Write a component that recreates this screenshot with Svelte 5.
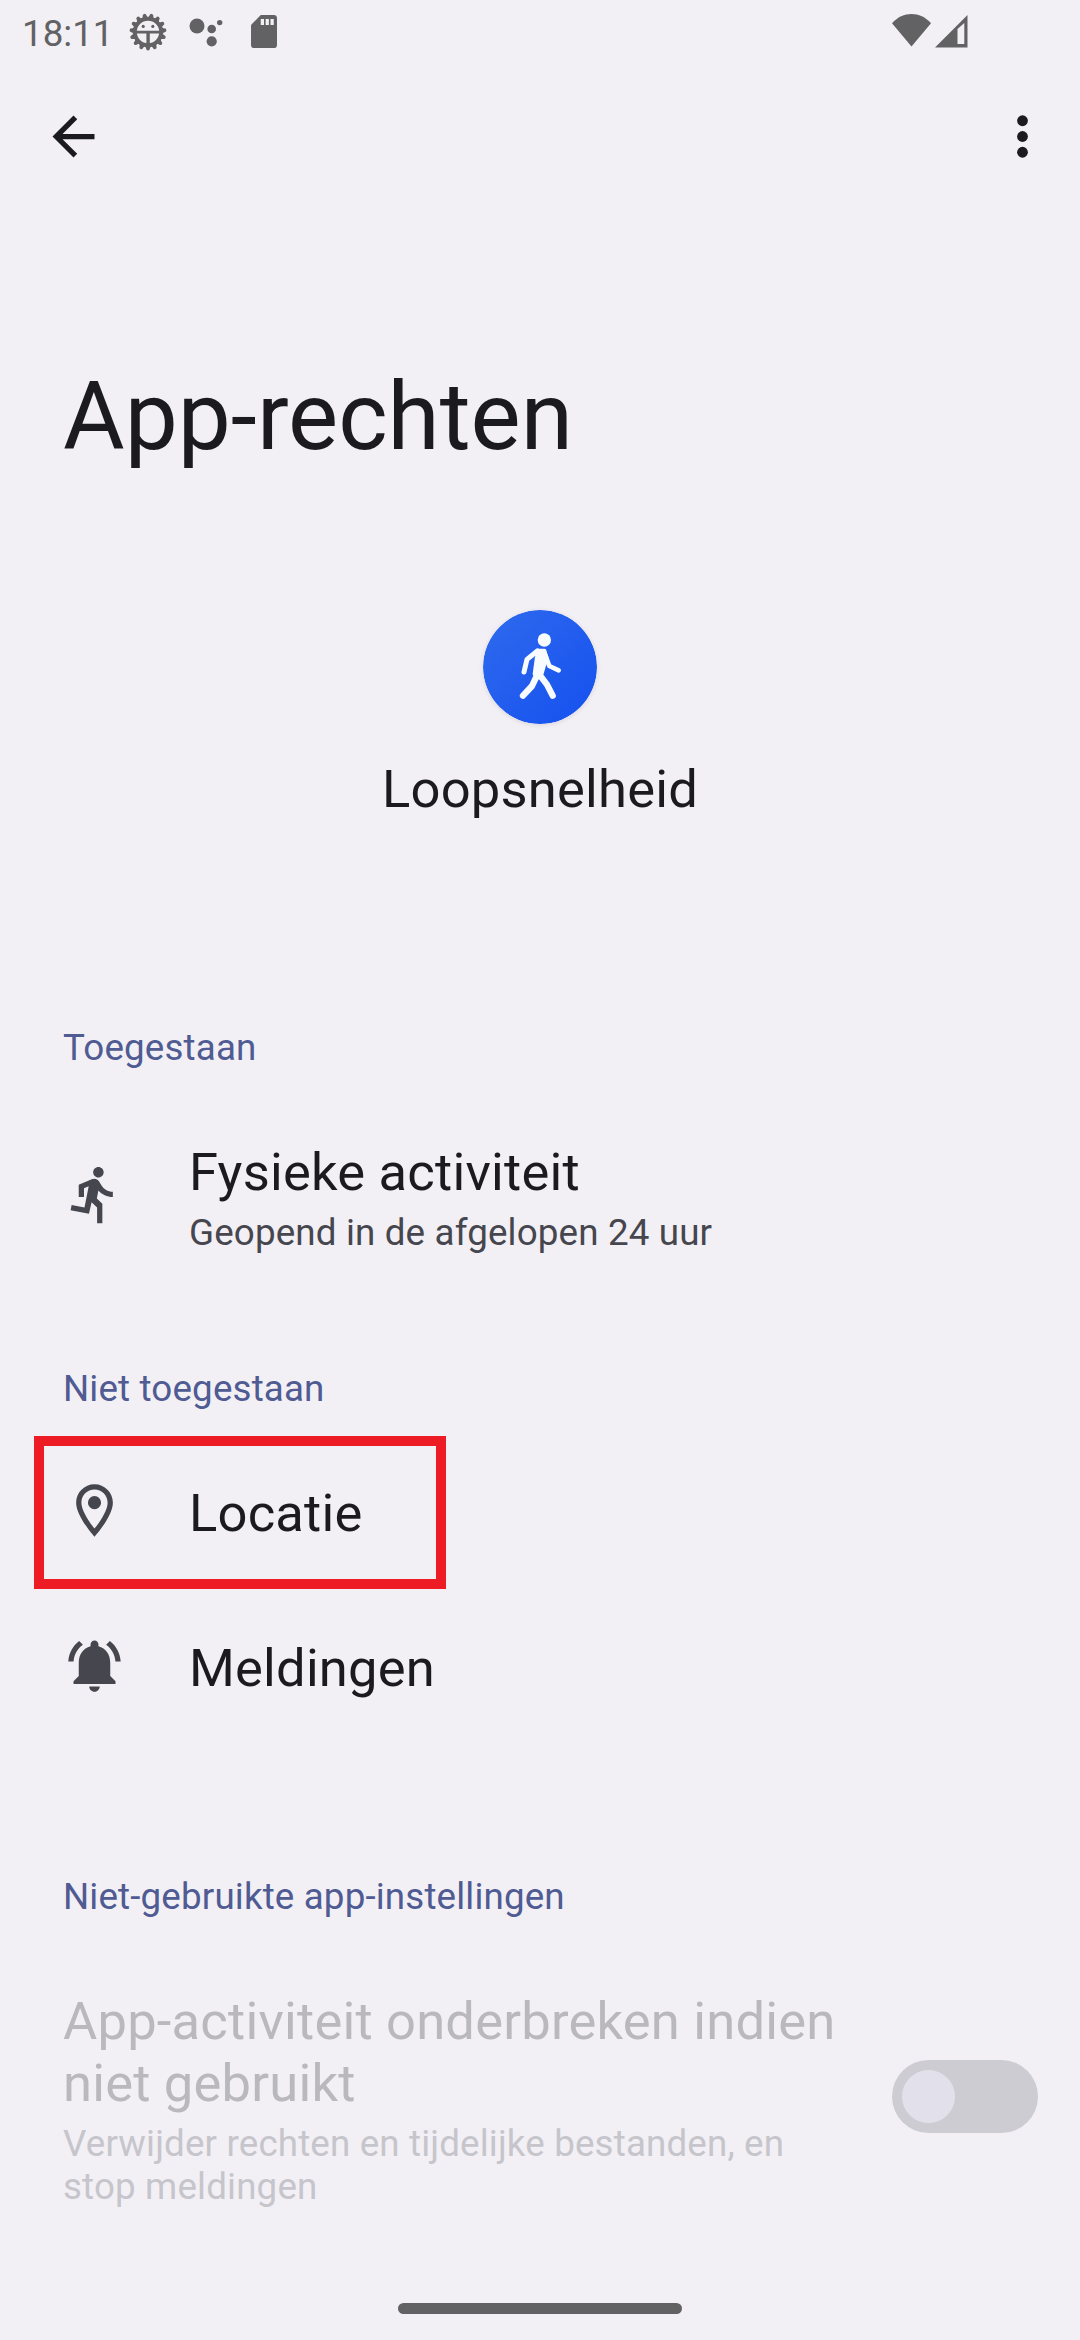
<script>
  const teeth = Array.from({ length: 15 }, (_, i) => 90 + i * 24);
  const blocked = [
    {
      label: 'Locatie',
      highlighted: true,
      icon: 'M12 2C8.13 2 5 5.13 5 9c0 5.25 7 13 7 13s7-7.75 7-13c0-3.87-3.13-7-7-7zM7 9c0-2.76 2.24-5 5-5s5 2.24 5 5c0 2.88-2.88 7.19-5 9.88C9.92 16.21 7 11.85 7 9zM12 6.5a2.5 2.5 0 1 0 0 5 2.5 2.5 0 0 0 0-5z',
    },
    {
      label: 'Meldingen',
      highlighted: false,
      icon: 'M7.58 4.08L6.15 2.65C3.75 4.48 2.17 7.3 2.03 10.5h2c.15-2.65 1.51-4.97 3.55-6.42zm12.39 6.42h2c-.15-3.2-1.73-6.02-4.12-7.85l-1.42 1.43c2.02 1.45 3.39 3.77 3.54 6.42zM18 11c0-3.07-1.64-5.64-4.5-6.32V4c0-.83-.67-1.5-1.5-1.5s-1.5.67-1.5 1.5v.68C7.63 5.36 6 7.92 6 11v5l-2 2v1h16v-1l-2-2v-5zm-6 11c.14 0 .27-.01.4-.04.65-.14 1.18-.58 1.44-1.18.1-.24.15-.5.15-.78h-4c.01 1.1.9 2 2.01 2z',
    },
  ];
</script>

<div class="screen">
  <header class="status">
    <span class="clock">18:11</span>
    <svg class="bug" viewBox="-19 -19 38 38">
      {#each teeth as angle}
        <path d="M13.5 -3L16.6 -1.9a1.9 1.9 0 0 1 0 3.8L13.5 3z" transform="rotate({angle})" />
      {/each}
      <circle r="13.2" fill="none" stroke="currentColor" stroke-width="4" />
      <path d="M-12 -1.3h24v2.8H1.8V12h-3.4V1.5H-12z" />
      <circle cx="-4.8" cy="-5.6" r="1.6" />
      <circle cx="4.8" cy="-5.6" r="1.6" />
    </svg>
    <svg class="dots" viewBox="0 0 34 34">
      <circle cx="8" cy="12" r="7.5" />
      <circle cx="22.7" cy="15" r="4.3" />
      <circle cx="30.7" cy="8.6" r="2.7" />
      <circle cx="22.7" cy="27.3" r="5.1" />
    </svg>
    <svg class="sd" viewBox="4 2 16 20" preserveAspectRatio="none">
      <path d="M18 2h-8L4.02 8 4 20c0 1.1.4 2 1.5 2h13c1.1 0 1.5-.9 1.5-2V4c0-1.1-.4-2-2-2zm-6 6h-2V4.4h2V8zm3 0h-2V4.4h2V8zm3 0h-2V4.4h2V8z" />
    </svg>
    <svg class="wifi" viewBox="0 0 39 33"><path d="M0 9.2C11-3 28-3 39 9.2L19.5 32.6z" /></svg>
    <svg class="signal" viewBox="0 0 33 33">
      <path fill-rule="evenodd" d="M0 32.5L32.5 0v32.5zM22.5 14v14.9h6.8V8z" />
    </svg>
  </header>

  <nav class="toolbar">
    <svg class="icon" viewBox="0 0 24 24"><path d="M20 11H7.83l5.59-5.59L12 4l-8 8 8 8 1.41-1.41L7.83 13H20v-2z" /></svg>
    <svg class="icon" viewBox="0 0 24 24">
      <circle cx="12" cy="6" r="2.05" /><circle cx="12" cy="12" r="2.05" /><circle cx="12" cy="18" r="2.05" />
    </svg>
  </nav>

  <h1>App-rechten</h1>

  <section class="app">
    <svg class="logo" viewBox="0 0 342 342">
      <defs>
        <linearGradient id="blue" x1="0" y1="0" x2="1" y2="1">
          <stop offset="0.15" stop-color="#2b66ee" />
          <stop offset="0.85" stop-color="#1954ef" />
        </linearGradient>
      </defs>
      <circle cx="171" cy="171" r="171" fill="url(#blue)" />
      <g fill="#f8fcff" stroke="#f8fcff" stroke-linecap="round" stroke-linejoin="round">
        <circle cx="184" cy="90" r="20" stroke="none" />
        <path d="M164 122L184 122L190 142L176 190L166 202L155 192L162 140z" stroke-width="12" />
        <path d="M163 123L132 148L123 186" fill="none" stroke-width="15" />
        <path d="M188 138L199 168L227 181" fill="none" stroke-width="14" />
        <path d="M162 196L147 228L120 257" fill="none" stroke-width="19" />
        <path d="M171 196L192 224L209 257" fill="none" stroke-width="19" />
      </g>
    </svg>
    <p class="title">Loopsnelheid</p>
  </section>

  <h2 class="allowed">Toegestaan</h2>
  <div class="row two-line">
    <svg class="icon" viewBox="0 0 24 24">
      <path d="M13.49 5.48c1.1 0 2-.9 2-2s-.9-2-2-2-2 .9-2 2 .9 2 2 2zm-3.6 13.9l1-4.4 2.1 2v6h2v-7.5l-2.1-2 .6-3c1.3 1.5 3.3 2.5 5.5 2.5v-2c-1.9 0-3.5-1-4.3-2.4l-1-1.6c-.4-.6-1-1-1.7-1-.3 0-.5.1-.8.1l-5.2 2.2v4.7h2v-3.4l1.8-.7-1.6 8.1-4.9-1-.4 2 7 1.4z" />
    </svg>
    <div>
      <p class="title">Fysieke activiteit</p>
      <p class="summary">Geopend in de afgelopen 24 uur</p>
    </div>
  </div>

  <h2 class="denied">Niet toegestaan</h2>
  {#each blocked as item}
    <div class="row single" class:highlighted={item.highlighted}>
      <svg class="icon" viewBox="0 0 24 24"><path d={item.icon} /></svg>
      <p class="title">{item.label}</p>
    </div>
  {/each}

  <h2 class="unused">Niet-gebruikte app-instellingen</h2>
  <div class="setting">
    <div class="copy">
      <p class="title">App-activiteit onderbreken indien<br />niet gebruikt</p>
      <p class="summary">Verwijder rechten en tijdelijke bestanden, en<br />stop meldingen</p>
    </div>
    <div class="switch"><span class="thumb"></span></div>
  </div>

  <div class="handle"></div>
</div>

<style>
  :global(body) {
    background: #f2f0f5;
  }
  .screen {
    display: flex;
    flex-direction: column;
    box-sizing: border-box;
    width: 1080px;
    height: 2340px;
    overflow: hidden;
    background: #f2f0f5;
    color: #1b1b1f;
    font-family: Roboto, sans-serif;
  }
  .screen > * {
    flex-shrink: 0;
  }
  svg {
    display: block;
    flex: none;
    fill: currentColor;
  }
  h1,
  h2,
  p {
    margin: 0;
    font-weight: 400;
    white-space: nowrap;
  }
  .status {
    display: flex;
    align-items: flex-start;
    height: 63px;
    padding-left: 22px;
    box-sizing: border-box;
    color: #626264;
  }
  .clock {
    width: 107px;
    margin-top: 12px;
    font-size: 36.75px;
    line-height: 43px;
  }
  .bug {
    width: 38px;
    height: 38px;
    margin-top: 12.5px;
  }
  .dots {
    width: 34px;
    height: 34px;
    margin: 14px 0 0 22px;
  }
  .sd {
    width: 26px;
    height: 33px;
    margin: 15px 0 0 28px;
  }
  .wifi {
    width: 39px;
    height: 33px;
    margin: 14px 0 0 615px;
  }
  .signal {
    width: 33px;
    height: 33px;
    margin: 14.5px 0 0 3.5px;
  }
  .icon {
    width: 63px;
    height: 63px;
  }
  .toolbar {
    display: flex;
    align-items: center;
    justify-content: space-between;
    height: 147px;
    padding: 0 26px 0 42px;
  }
  h1 {
    margin-top: 152px;
    padding-left: 63px;
    font-size: 94.5px;
    line-height: 110px;
  }
  .app {
    display: flex;
    flex-direction: column;
    align-items: center;
    margin-top: 138px;
  }
  .logo {
    width: 114px;
    height: 114px;
    border-radius: 50%;
    box-shadow: 0 1px 5px rgb(0 0 0 / 0.1);
  }
  .app .title {
    margin-top: 34px;
  }
  .title {
    font-size: 52.5px;
    line-height: 62px;
    letter-spacing: 0.21px;
  }
  .summary {
    color: #46464f;
    font-size: 36.75px;
    line-height: 43px;
    letter-spacing: 0.15px;
  }
  h2 {
    padding-left: 63px;
    color: #4f5b92;
    font-size: 36.75px;
    line-height: 43px;
    letter-spacing: 0.15px;
  }
  .allowed {
    margin-top: 206px;
  }
  .row {
    display: flex;
    padding-left: 63px;
    gap: 63px;
  }
  .row .icon {
    color: #46464f;
  }
  .two-line {
    margin-top: 72px;
  }
  .two-line .icon {
    margin-top: 22px;
  }
  .two-line .summary {
    margin-top: 8px;
  }
  .denied {
    margin-top: 113px;
  }
  .row.single {
    box-sizing: border-box;
    height: 153px;
    margin: 2px 0 0 34px;
    padding: 46px 0 0 29px;
  }
  .single .icon {
    margin-top: -3px;
  }
  .denied + .row.single {
    margin-top: 26px;
  }
  .row.highlighted {
    width: 412px;
    padding: 36px 0 0 19px;
    border: 10px solid #ed1c24;
  }
  .unused {
    margin-top: 131px;
  }
  .setting {
    display: flex;
    align-items: center;
    justify-content: space-between;
    margin-top: 72px;
    padding: 0 42px 0 63px;
  }
  .copy .title {
    color: #b9b8bd;
  }
  .copy .summary {
    margin-top: 8px;
    color: #c6c5cb;
  }
  .switch {
    box-sizing: border-box;
    width: 146px;
    height: 73px;
    margin-bottom: 5px;
    padding: 10px;
    border-radius: 37px;
    background: #cdccd2;
  }
  .thumb {
    display: block;
    width: 53px;
    height: 53px;
    border-radius: 50%;
    background: #e2e0eb;
  }
  .handle {
    width: 284px;
    height: 11px;
    margin: auto auto 26px;
    border-radius: 6px;
    background: #626264;
  }
</style>
